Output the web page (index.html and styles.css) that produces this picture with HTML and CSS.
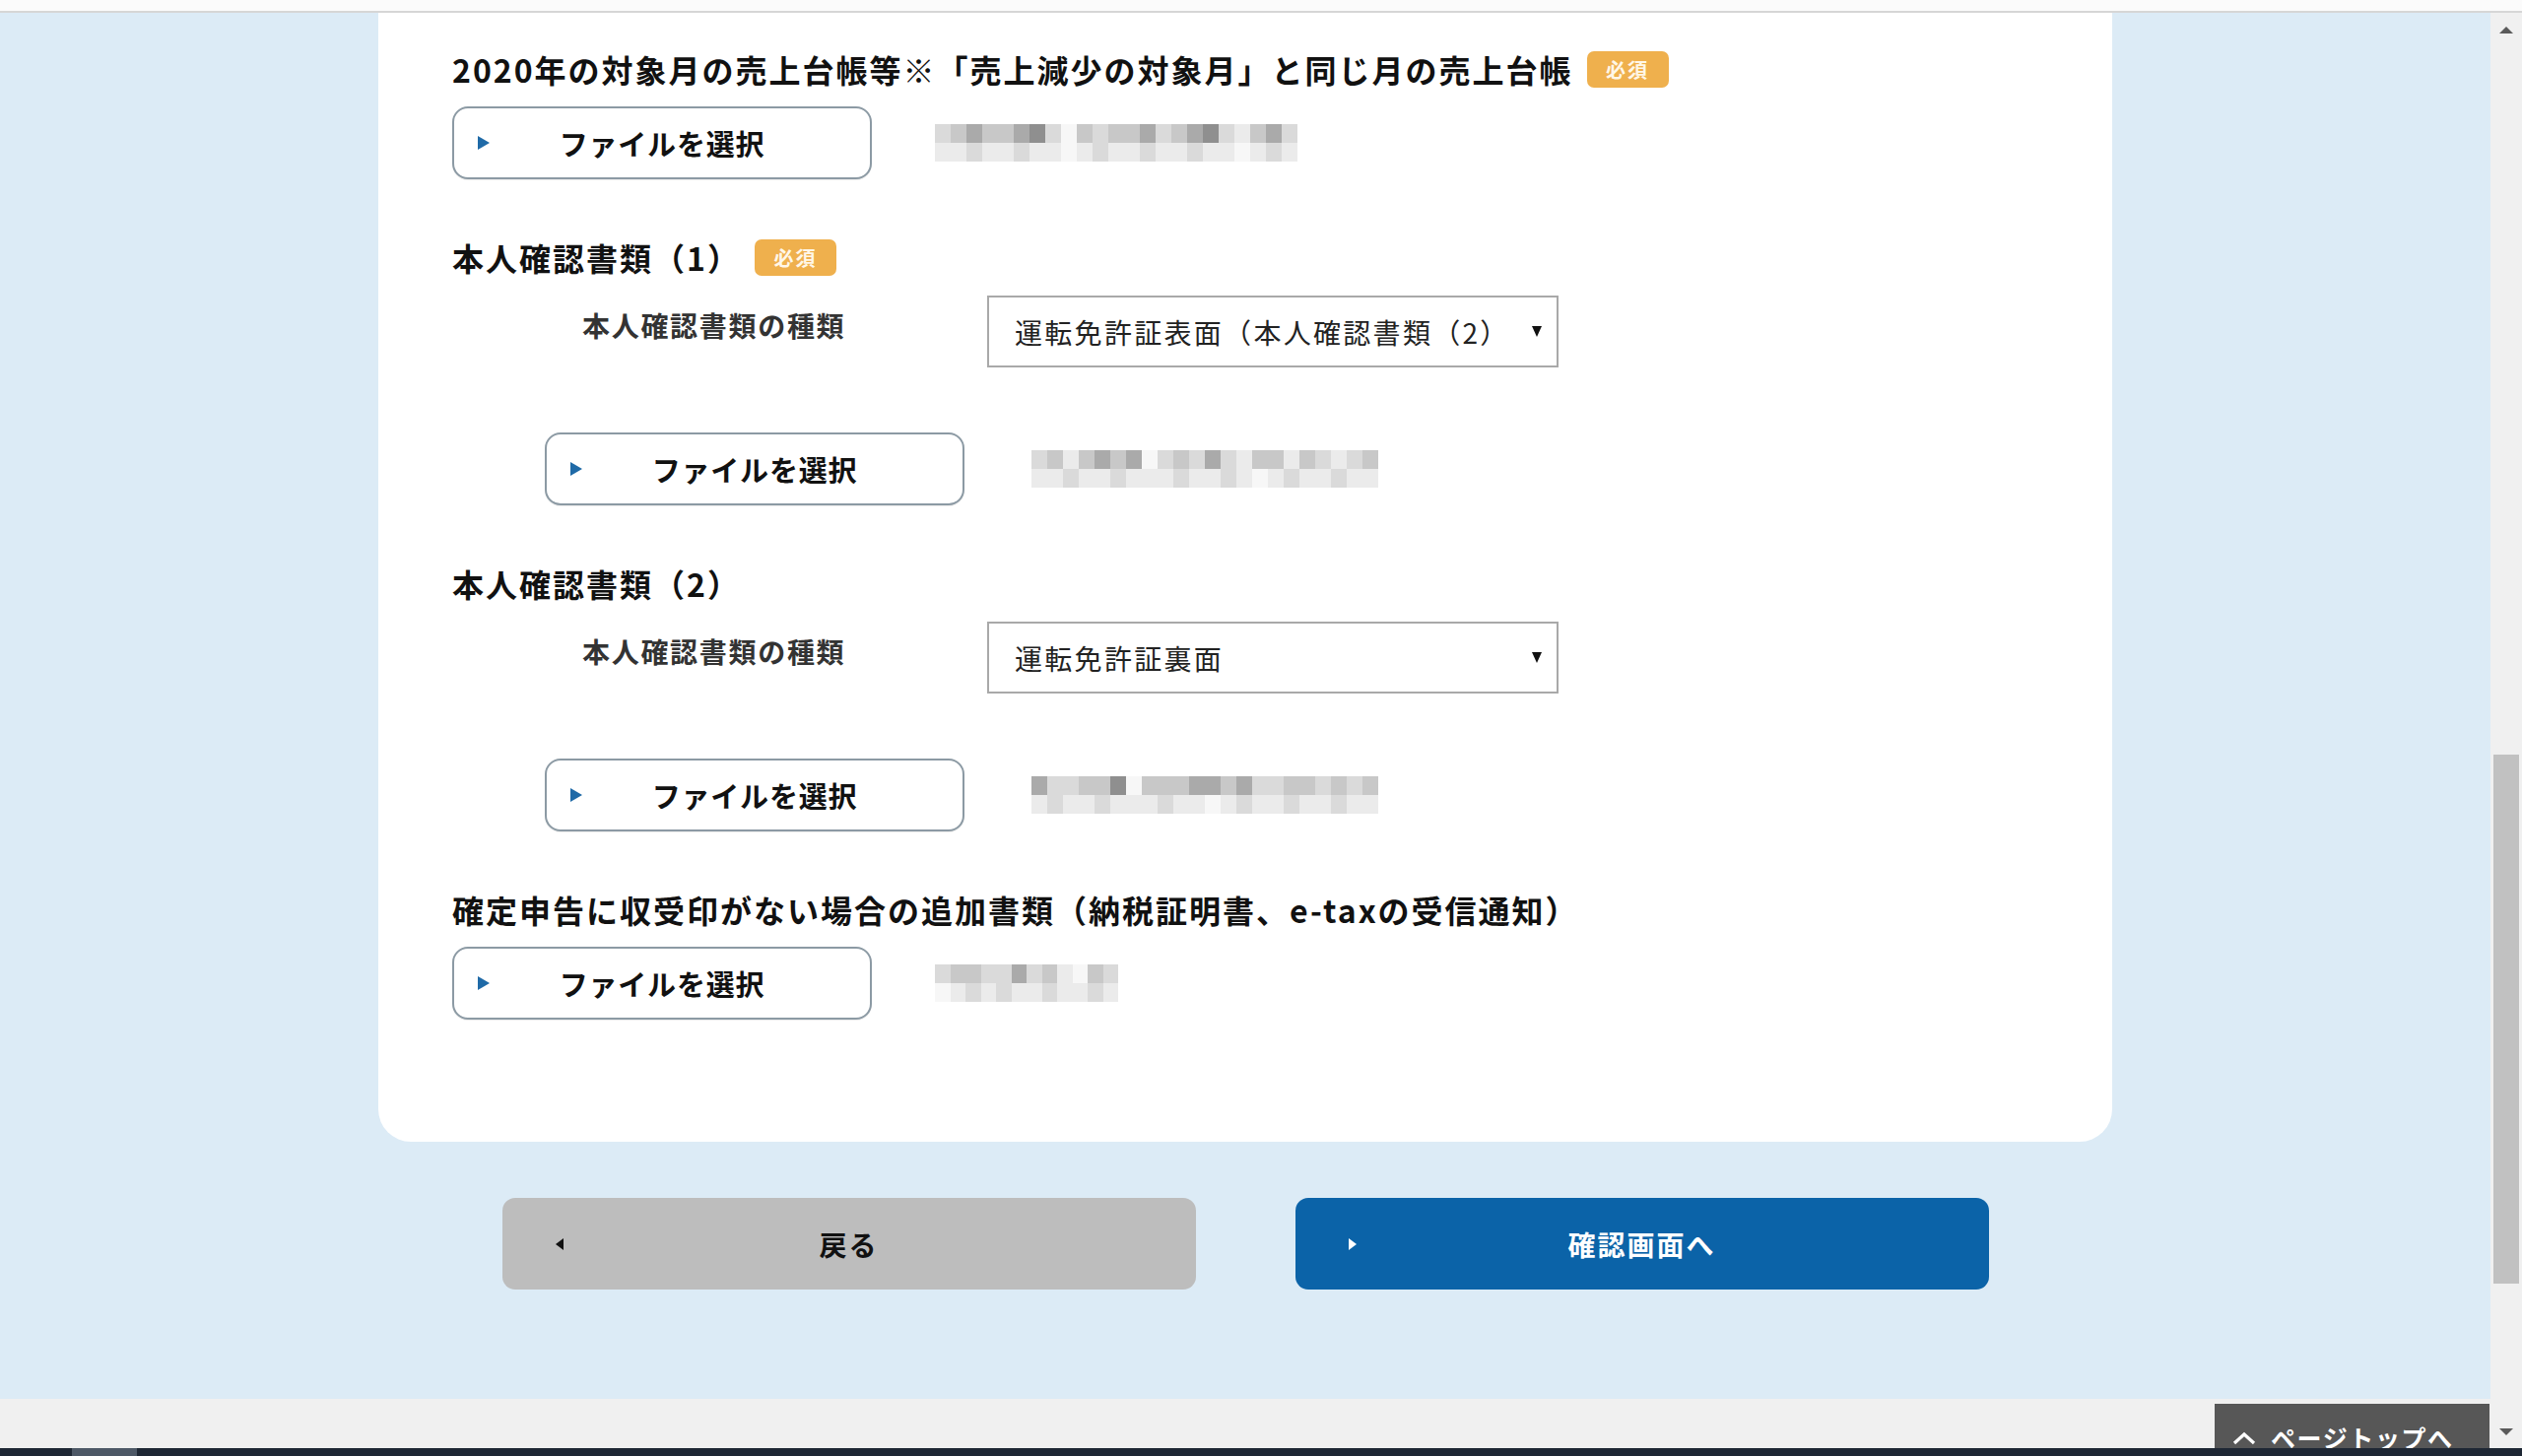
FILE: index.html
```html
<!DOCTYPE html>
<html lang="ja">
<head>
<meta charset="utf-8">
<title>書類アップロード</title>
<link rel="stylesheet" href="styles.css">
</head>
<body>
<div class="topstrip"></div>
<div class="window">
  <div class="viewport">
    <main class="page">
      <section class="card">
        <div class="field">
          <div class="field-title"><h3>2020年の対象月の売上台帳等※「売上減少の対象月」と同じ月の売上台帳</h3><span class="badge">必須</span></div>
          <div class="file-row">
            <button class="file-btn" type="button"><span class="tri"></span><span class="btn-text">ファイルを選択</span><span></span></button>
            <div class="mosaic w23">
              <i class="c2"></i><i class="c3"></i><i class="c4"></i><i class="c3"></i><i class="c3"></i><i class="c4"></i><i class="c5"></i><i class="c2"></i><i class="c0"></i><i class="c3"></i><i class="c2"></i><i class="c3"></i><i class="c3"></i><i class="c4"></i><i class="c2"></i><i class="c3"></i><i class="c4"></i><i class="c5"></i><i class="c2"></i><i class="c1"></i><i class="c3"></i><i class="c4"></i><i class="c2"></i>
              <i class="c1"></i><i class="c1"></i><i class="c2"></i><i class="c1"></i><i class="c1"></i><i class="c2"></i><i class="c1"></i><i class="c1"></i><i class="c0"></i><i class="c1"></i><i class="c2"></i><i class="c1"></i><i class="c1"></i><i class="c2"></i><i class="c1"></i><i class="c1"></i><i class="c2"></i><i class="c1"></i><i class="c1"></i><i class="c0"></i><i class="c1"></i><i class="c2"></i><i class="c1"></i>
            </div>
          </div>
        </div>

        <div class="field">
          <div class="field-title"><h3>本人確認書類（1）</h3><span class="badge">必須</span></div>
          <div class="type-row">
            <div class="type-label">本人確認書類の種類</div>
            <div class="select"><span class="select-text">運転免許証表面（本人確認書類（2）</span><span class="caret"></span></div>
          </div>
          <div class="file-row sub">
            <button class="file-btn" type="button"><span class="tri"></span><span class="btn-text">ファイルを選択</span><span></span></button>
            <div class="mosaic w22">
              <i class="c2"></i><i class="c3"></i><i class="c1"></i><i class="c3"></i><i class="c4"></i><i class="c3"></i><i class="c4"></i><i class="c0"></i><i class="c2"></i><i class="c3"></i><i class="c2"></i><i class="c4"></i><i class="c2"></i><i class="c1"></i><i class="c3"></i><i class="c3"></i><i class="c1"></i><i class="c3"></i><i class="c2"></i><i class="c1"></i><i class="c2"></i><i class="c3"></i>
              <i class="c1"></i><i class="c1"></i><i class="c2"></i><i class="c1"></i><i class="c1"></i><i class="c2"></i><i class="c1"></i><i class="c1"></i><i class="c1"></i><i class="c2"></i><i class="c1"></i><i class="c1"></i><i class="c2"></i><i class="c1"></i><i class="c0"></i><i class="c1"></i><i class="c2"></i><i class="c1"></i><i class="c1"></i><i class="c2"></i><i class="c1"></i><i class="c1"></i>
            </div>
          </div>
        </div>

        <div class="field">
          <div class="field-title"><h3>本人確認書類（2）</h3></div>
          <div class="type-row">
            <div class="type-label">本人確認書類の種類</div>
            <div class="select"><span class="select-text">運転免許証裏面</span><span class="caret"></span></div>
          </div>
          <div class="file-row sub">
            <button class="file-btn" type="button"><span class="tri"></span><span class="btn-text">ファイルを選択</span><span></span></button>
            <div class="mosaic w22">
              <i class="c4"></i><i class="c2"></i><i class="c2"></i><i class="c3"></i><i class="c3"></i><i class="c5"></i><i class="c0"></i><i class="c3"></i><i class="c3"></i><i class="c3"></i><i class="c4"></i><i class="c4"></i><i class="c3"></i><i class="c4"></i><i class="c2"></i><i class="c2"></i><i class="c3"></i><i class="c3"></i><i class="c2"></i><i class="c3"></i><i class="c2"></i><i class="c3"></i>
              <i class="c1"></i><i class="c2"></i><i class="c1"></i><i class="c1"></i><i class="c2"></i><i class="c1"></i><i class="c1"></i><i class="c1"></i><i class="c2"></i><i class="c1"></i><i class="c1"></i><i class="c0"></i><i class="c1"></i><i class="c2"></i><i class="c1"></i><i class="c1"></i><i class="c2"></i><i class="c1"></i><i class="c1"></i><i class="c2"></i><i class="c1"></i><i class="c1"></i>
            </div>
          </div>
        </div>

        <div class="field">
          <div class="field-title"><h3>確定申告に収受印がない場合の追加書類（納税証明書、e-taxの受信通知）</h3></div>
          <div class="file-row">
            <button class="file-btn" type="button"><span class="tri"></span><span class="btn-text">ファイルを選択</span><span></span></button>
            <div class="mosaic w12">
              <i class="c2"></i><i class="c3"></i><i class="c3"></i><i class="c2"></i><i class="c2"></i><i class="c4"></i><i class="c2"></i><i class="c3"></i><i class="c1"></i><i class="c0"></i><i class="c3"></i><i class="c2"></i>
              <i class="c0"></i><i class="c1"></i><i class="c2"></i><i class="c1"></i><i class="c2"></i><i class="c1"></i><i class="c1"></i><i class="c2"></i><i class="c1"></i><i class="c1"></i><i class="c2"></i><i class="c1"></i>
            </div>
          </div>
        </div>
      </section>

      <div class="actions">
        <button class="action back" type="button"><span class="tri-left"></span><span>戻る</span><span></span></button>
        <button class="action next" type="button"><span class="tri-right"></span><span>確認画面へ</span><span></span></button>
      </div>
    </main>
    <div class="bottombar">
      <a class="pagetop" href="#top">
        <svg class="chev" width="24" height="14" viewBox="0 0 24 14"><polyline points="2,12 12,3 22,12" fill="none" stroke="#fff" stroke-width="3.2"/></svg>
        <span>ページトップへ</span>
      </a>
    </div>
  </div>
  <div class="scrollbar">
    <div class="sb-btn"><span class="sb-up"></span></div>
    <div class="sb-track"><div class="sb-thumb"></div></div>
    <div class="sb-btn"><span class="sb-down"></span></div>
  </div>
</div>
<div class="taskbar"><span class="task-item"></span></div>
</body>
</html>
```

FILE: styles.css
```css
html, body {
  margin: 0;
  padding: 0;
}

body {
  width: 2560px;
  height: 1478px;
  overflow: hidden;
  background: #dcebf6;
  color: #111;
  font-family: "Noto Sans CJK JP", "Noto Sans", sans-serif;
}

.topstrip {
  height: 11px;
  background: #fbfbfb;
  border-bottom: 2px solid #d6d6d6;
}

.window {
  display: flex;
  height: 1457px;
}

.viewport {
  flex: 1;
  min-width: 0;
  display: flex;
  flex-direction: column;
}

.page {
  flex: 1;
  display: flex;
  flex-direction: column;
  align-items: center;
  overflow: hidden;
  background: #dcebf6;
}

.card {
  width: 1760px;
  box-sizing: border-box;
  background: #fff;
  border-radius: 0 0 33px 33px;
  padding: 35px 75px 124px;
}

.field + .field {
  margin-top: 57px;
}

.field-title {
  display: flex;
  align-items: center;
  height: 44px;
}

.field-title h3 {
  margin: 0;
  font-size: 32px;
  line-height: 44px;
  font-weight: 700;
  letter-spacing: 2px;
  color: #111;
  white-space: nowrap;
}

.badge {
  margin-left: 14px;
  width: 83px;
  height: 37px;
  border-radius: 7px;
  background: #efb04d;
  color: #fff7e8;
  font-size: 20px;
  font-weight: 700;
  letter-spacing: 2px;
  display: flex;
  align-items: center;
  justify-content: center;
}

.file-row {
  display: flex;
  align-items: center;
  gap: 64px;
  margin-top: 16px;
}

.file-row.sub {
  margin-top: 66px;
  padding-left: 94px;
  gap: 68px;
}

.file-btn {
  width: 426px;
  height: 74px;
  box-sizing: border-box;
  border: 2px solid #8c9aa4;
  border-radius: 16px;
  background: #fff;
  padding: 0 24px;
  display: grid;
  grid-template-columns: 13px 1fr 13px;
  align-items: center;
  font-family: inherit;
  font-size: 29px;
  font-weight: 700;
  letter-spacing: 0.8px;
  color: #111;
  box-shadow: 0 1px 1px rgba(0, 0, 0, 0.08);
}

.btn-text {
  text-align: center;
}

.tri {
  width: 0;
  height: 0;
  border-left: 12px solid #1f6aa7;
  border-top: 7px solid transparent;
  border-bottom: 7px solid transparent;
}

.mosaic {
  display: grid;
  grid-auto-rows: 19px;
}

.mosaic i {
  display: block;
}

.mosaic.w23 { grid-template-columns: repeat(23, 16px); }
.mosaic.w22 { grid-template-columns: repeat(22, 16px); }
.mosaic.w12 { grid-template-columns: repeat(12, 15.5px); }

.c0 { background: #f7f7f7; }
.c1 { background: #ebebeb; }
.c2 { background: #dadada; }
.c3 { background: #c8c8c8; }
.c4 { background: #aaaaaa; }
.c5 { background: #8f8f8f; }

.type-row {
  display: flex;
  align-items: flex-start;
  margin-top: 17px;
  padding-left: 132px;
}

.type-label {
  width: 411px;
  padding-top: 8px;
  font-size: 28px;
  line-height: 44px;
  font-weight: 700;
  letter-spacing: 1.7px;
  color: #333;
}

.select {
  width: 580px;
  height: 73px;
  box-sizing: border-box;
  border: 2px solid #a9a9a9;
  background: #fff;
  display: flex;
  align-items: center;
  justify-content: space-between;
  padding: 0 15px 0 26px;
}

.select-text {
  font-size: 28px;
  letter-spacing: 2.3px;
  color: #222;
  white-space: nowrap;
  overflow: hidden;
}

.caret {
  flex: none;
  width: 0;
  height: 0;
  border-top: 11px solid #111;
  border-left: 5px solid transparent;
  border-right: 5px solid transparent;
}

.actions {
  display: flex;
  gap: 101px;
  margin-top: 57px;
}

.action {
  width: 704px;
  height: 93px;
  border: none;
  border-radius: 13px;
  padding: 0 54px;
  display: grid;
  grid-template-columns: 9px 1fr 9px;
  align-items: center;
  font-family: inherit;
  font-size: 28px;
  line-height: 40px;
  font-weight: 700;
  letter-spacing: 2px;
  text-align: center;
}

.action.back {
  background: #bdbdbd;
  color: #111;
}

.action.next {
  background: #0b63a8;
  color: #fff;
}

.tri-left {
  width: 0;
  height: 0;
  border-right: 8px solid #111;
  border-top: 6px solid transparent;
  border-bottom: 6px solid transparent;
}

.tri-right {
  width: 0;
  height: 0;
  border-left: 8px solid #fff;
  border-top: 6px solid transparent;
  border-bottom: 6px solid transparent;
}

.bottombar {
  height: 50px;
  box-sizing: border-box;
  background: #f0f0f0;
  display: flex;
  justify-content: flex-end;
  align-items: flex-start;
  padding: 5px 1px 0 0;
  overflow: hidden;
}

.pagetop {
  flex: none;
  width: 279px;
  height: 60px;
  box-sizing: border-box;
  background: #575757;
  color: #fff;
  text-decoration: none;
  display: flex;
  align-items: flex-start;
  gap: 15px;
  padding: 19px 0 0 18px;
  font-size: 25px;
  line-height: 30px;
  font-weight: 700;
  letter-spacing: 1.6px;
}

.chev {
  flex: none;
  margin-top: 9px;
}

.scrollbar {
  width: 32px;
  flex: none;
  background: #f0f0f0;
  display: flex;
  flex-direction: column;
}

.sb-btn {
  height: 34px;
  display: flex;
  align-items: center;
  justify-content: center;
}

.sb-up {
  width: 0;
  height: 0;
  border-bottom: 7px solid #5a5a5a;
  border-left: 7px solid transparent;
  border-right: 7px solid transparent;
}

.sb-down {
  width: 0;
  height: 0;
  border-top: 7px solid #5a5a5a;
  border-left: 7px solid transparent;
  border-right: 7px solid transparent;
}

.sb-track {
  flex: 1;
  padding: 719px 3px 0;
}

.sb-thumb {
  height: 537px;
  background: #c1c1c1;
}

.taskbar {
  height: 8px;
  background: #1e2734;
  display: flex;
}

.task-item {
  margin-left: 73px;
  width: 66px;
  background: #4d5866;
}
```
